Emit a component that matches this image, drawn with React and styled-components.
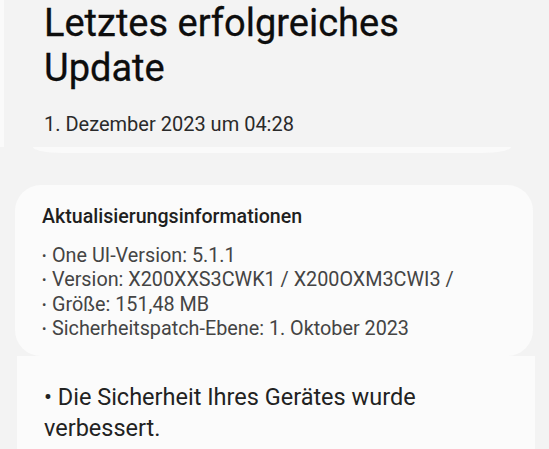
import React from "react";
import styled, { createGlobalStyle } from "styled-components";

const Global = createGlobalStyle`
  html, body { margin: 0; padding: 0; }
  body {
    background: #f3f3f3;
    font-family: Roboto, "Noto Sans", sans-serif;
    width: 549px;
    height: 449px;
    overflow: hidden;
  }
`;

const Page = styled.div`
  display: flex;
  flex-direction: column;
  width: 549px;
  height: 449px;
  background: #f3f3f3;
`;

const TopSection = styled.section`
  display: flex;
  flex-direction: column;
  height: 147px;
  box-sizing: border-box;
  padding: 1px 0 0 40px;
  border-left: 4px solid #fafafa;
`;

const Title = styled.h1`
  margin: 0;
  font-size: 38px;
  font-weight: 400;
  line-height: 45px;
  color: #0d0d0d;
  letter-spacing: 0;
  -webkit-text-stroke: 0.3px #0d0d0d;
`;

const DateLine = styled.div`
  margin-top: 21px;
  font-size: 20px;
  line-height: 24px;
  color: #2a2a2a;
`;

const CardTail = styled.div`
  height: 6px;
  margin: 0 38px 0 33px;
  background: #fafafa;
  border-radius: 0 0 30px 30px / 0 0 6px 6px;
`;

const InfoCard = styled.section`
  margin: 32px 16px 0 15px;
  height: 171px;
  box-sizing: border-box;
  padding: 20px 0 0 27px;
  background: #fbfbfb;
  border-radius: 26px;
`;

const InfoTitle = styled.h2`
  margin: 0 0 16px;
  font-size: 19.6px;
  font-weight: 500;
  line-height: 23px;
  color: #1f1f1f;
`;

const InfoList = styled.ul`
  list-style: none;
  margin: 0;
  padding: 0;
`;

const InfoItem = styled.li`
  font-size: 19.8px;
  line-height: 24.3px;
  color: #444;
  &::before {
    content: "•";
    display: inline-block;
    width: 10px;
    font-size: 13px;
    vertical-align: 2px;
  }
`;

const NotesPanel = styled.section`
  flex: 1;
  margin: 0 14px 0 17px;
  box-sizing: border-box;
  padding: 26px 0 0 27px;
  background: #fbfbfb;
`;

const Note = styled.p`
  margin: 0;
  font-size: 23.5px;
  line-height: 31px;
  color: #222;
  width: 410px;
`;

const info = [
  "One UI-Version: 5.1.1",
  "Version: X200XXS3CWK1 / X200OXM3CWI3 /",
  "Größe: 151,48 MB",
  "Sicherheitspatch-Ebene: 1. Oktober 2023",
];

export default function App() {
  return (
    <>
      <Global />
      <Page>
        <TopSection>
          <Title>
            Letztes erfolgreiches
            <br />
            Update
          </Title>
          <DateLine>1. Dezember 2023 um 04:28</DateLine>
        </TopSection>
        <CardTail />
        <InfoCard>
          <InfoTitle>Aktualisierungsinformationen</InfoTitle>
          <InfoList>
            {info.map((t) => (
              <InfoItem key={t}>{t}</InfoItem>
            ))}
          </InfoList>
        </InfoCard>
        <NotesPanel>
          <Note>• Die Sicherheit Ihres Gerätes wurde verbessert.</Note>
        </NotesPanel>
      </Page>
    </>
  );
}
